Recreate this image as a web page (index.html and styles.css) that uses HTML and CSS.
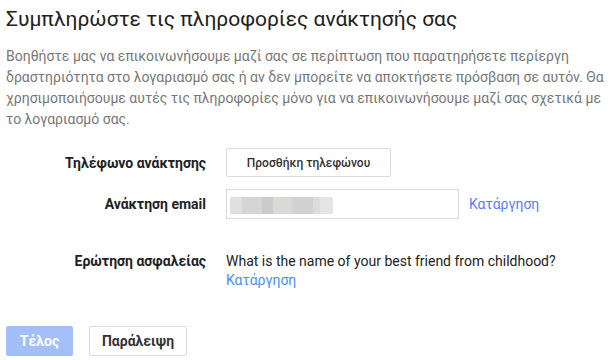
FILE: index.html
```html
<!DOCTYPE html>
<html lang="el">
<head>
    <meta charset="UTF-8">
    <title>Πληροφορίες ανάκτησης</title>
    <link rel="stylesheet" href="styles.css">
</head>
<body>
    <div class="page">
        <h1 class="title">Συμπληρώστε τις πληροφορίες ανάκτησής σας</h1>
        <p class="intro">Βοηθήστε μας να επικοινωνήσουμε μαζί σας σε περίπτωση που παρατηρήσετε περίεργη δραστηριότητα στο λογαριασμό σας ή αν δεν μπορείτε να αποκτήσετε πρόσβαση σε αυτόν. Θα χρησιμοποιήσουμε αυτές τις πληροφορίες μόνο για να επικοινωνήσουμε μαζί σας σχετικά με το λογαριασμό σας.</p>

        <div class="form">
            <div class="row phone-row">
                <div class="label">Τηλέφωνο ανάκτησης</div>
                <div class="value">
                    <button class="btn btn-small">Προσθήκη τηλεφώνου</button>
                </div>
            </div>
            <div class="row email-row">
                <div class="label">Ανάκτηση email</div>
                <div class="value">
                    <div class="email-box">
                        <div class="blur">
                            <span style="width:12px;background:#e0e0e0"></span>
                            <span style="width:20px;background:#d5d5d5"></span>
                            <span style="width:11px;background:#cbcbcd"></span>
                            <span style="width:19px;background:#d9d9d5"></span>
                            <span style="width:21px;background:#d2d2d2"></span>
                            <span style="width:7px;background:#dcdcdc"></span>
                            <span style="width:13px;background:#e4e4e2"></span>
                        </div>
                    </div>
                    <a href="#" class="link">Κατάργηση</a>
                </div>
            </div>
            <div class="row question-row">
                <div class="label">Ερώτηση ασφαλείας</div>
                <div class="value stacked">
                    <div class="question">What is the name of your best friend from childhood?</div>
                    <a href="#" class="link link-light">Κατάργηση</a>
                </div>
            </div>
        </div>

        <div class="actions">
            <button class="btn btn-primary" disabled>Τέλος</button>
            <button class="btn btn-plain">Παράλειψη</button>
        </div>
    </div>
</body>
</html>
```

FILE: styles.css
```css
* {
    margin: 0;
    padding: 0;
    box-sizing: border-box;
}
body {
    background: #fff;
    font-family: Roboto, "Noto Sans", Arial, sans-serif;
    color: #212121;
}
.page {
    width: 610px;
    padding: 6px 4px 0 6px;
}
.title {
    font-size: 21px;
    font-weight: 400;
    line-height: 26px;
    color: #212121;
}
.intro {
    margin-top: 14px;
    font-size: 14px;
    line-height: 21px;
    color: #777;
}
.form {
    margin-top: 18px;
}
.row {
    display: flex;
    align-items: center;
}
.label {
    width: 200px;
    text-align: right;
    font-size: 14px;
    font-weight: 700;
    color: #222;
}
.value {
    margin-left: 20px;
    display: flex;
    align-items: center;
}
.email-row {
    margin-top: 12px;
}
.question-row {
    margin-top: 32px;
    align-items: flex-start;
}
.question-row .label {
    line-height: 20px;
}
.stacked {
    flex-direction: column;
    align-items: flex-start;
}
.question {
    font-size: 14px;
    line-height: 20px;
    color: #222;
}
.btn {
    font-family: Roboto, "Noto Sans", Arial, sans-serif;
    font-size: 14px;
    font-weight: 700;
    background: #fff;
    color: #333;
    border: 1px solid #dcdcdc;
    border-radius: 2px;
    cursor: pointer;
}
.btn-small {
    width: 165px;
    height: 29px;
    font-size: 12px;
    font-weight: 500;
}
.email-box {
    width: 233px;
    height: 30px;
    border: 1px solid #d9d9d9;
    padding: 7px 0 0 3px;
}
.blur {
    display: flex;
    height: 17px;
}
.blur span {
    display: block;
    height: 100%;
}
.link {
    margin-left: 10px;
    font-size: 14px;
    color: #5a7ef0;
    text-decoration: none;
}
.link-light {
    margin-left: 0;
    line-height: 19px;
    color: #4d8df5;
}
.actions {
    margin-top: 36px;
    display: flex;
    gap: 16px;
}
.btn-primary {
    width: 67px;
    height: 30px;
    background: #a2bff7;
    border-color: #a2bff7;
    color: #fff;
}
.btn-plain {
    width: 98px;
    height: 30px;
}
```
